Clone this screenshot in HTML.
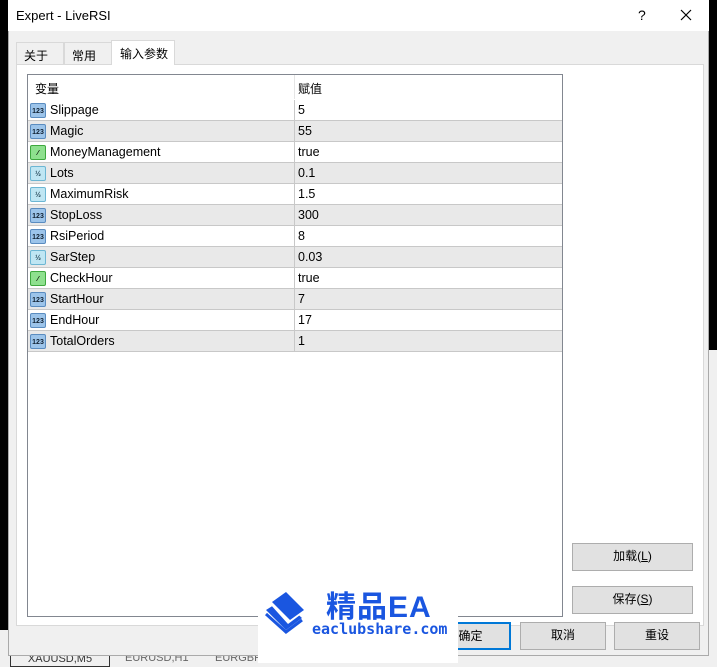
<!DOCTYPE html>
<html><head><style>
*{margin:0;padding:0;box-sizing:border-box}
body{width:717px;height:667px;background:#000;position:relative;overflow:hidden;font-family:"Liberation Sans","Noto Sans CJK SC",sans-serif;font-size:12px;color:#000}
.a{position:absolute}
.row{position:absolute;left:28px;width:534px;height:21px;border-bottom:1px solid #c8c8c8;font-size:12.5px}
.row .n{position:absolute;left:22px;top:3px}
.row .v{position:absolute;left:270px;top:3px}
.row .ic{position:absolute;left:2px;top:3px;width:16px;height:15px;border-radius:2px;font-size:7px;line-height:15px;text-align:center;font-weight:bold}
.i123{background:#9cc4ea;border:1px solid #5a8cc0;color:#123}
.ibool{background:#8ee08e;border:1px solid #3ea83e}
.ihalf{background:#bfe6f3;border:1px solid #6cb6d3;color:#245}
.g{background:#e9e9e9}
.btn{position:absolute;background:#e1e1e1;border:1px solid #adadad;text-align:center;line-height:25px;font-size:12px}
</style></head><body>
<div class="a" style="left:0;top:350px;width:717px;height:317px;background:#f0f0f0"></div>
<div class="a" style="left:0;top:0;width:8px;height:667px;background:#000"></div>
<div class="a" style="left:0;top:630px;width:8px;height:37px;background:#f0f0f0"></div>
<div class="a" style="left:10px;top:652px;width:100px;height:15px;border:1px solid #333;font-size:11px;color:#333;text-align:center">XAUUSD,M5</div>
<div class="a" style="left:125px;top:652px;font-size:11px;color:#666">EURUSD,H1</div>
<div class="a" style="left:215px;top:652px;font-size:11px;color:#666">EURGBP,H1</div>
<!-- dialog -->
<div class="a" style="left:8px;top:0;width:701px;height:656px;background:#f0f0f0;border:1px solid #aaa"></div>
<div class="a" style="left:8px;top:0;width:701px;height:31px;background:#fff"></div>
<div class="a" style="left:16px;top:8px;font-size:13px">Expert - LiveRSI</div>
<div class="a" style="left:638px;top:7px;font-size:14px">?</div>
<svg class="a" style="left:680px;top:9px" width="12" height="12"><path d="M1 1L11 11M11 1L1 11" stroke="#000" stroke-width="1.2"/></svg>
<!-- tabs -->
<div class="a" style="left:16px;top:42px;width:48px;height:22px;border:1px solid #d9d9d9;border-bottom:none;background:#f0f0f0;padding:4px 0 0 7px">关于</div>
<div class="a" style="left:64px;top:42px;width:48px;height:22px;border:1px solid #d9d9d9;border-bottom:none;background:#f0f0f0;padding:4px 0 0 7px">常用</div>
<div class="a" style="left:16px;top:64px;width:688px;height:562px;background:#fff;border:1px solid #d9d9d9"></div>
<div class="a" style="left:111px;top:40px;width:64px;height:25px;border:1px solid #d9d9d9;border-bottom:none;background:#fff;padding:4px 0 0 8px">输入参数</div>
<!-- table -->
<div class="a" style="left:27px;top:74px;width:536px;height:543px;border:1px solid #828790;background:#fff"></div>
<div class="a" style="left:294px;top:75px;width:1px;height:24px;background:#e5e5e5"></div>
<div class="a" style="left:35px;top:80px">变量</div>
<div class="a" style="left:298px;top:80px">赋值</div>
<div class="row" style="top:100px"><span class="ic i123">123</span><span class="n">Slippage</span><span class="v">5</span></div>
<div class="row g" style="top:121px"><span class="ic i123">123</span><span class="n">Magic</span><span class="v">55</span></div>
<div class="row" style="top:142px"><span class="ic ibool">⁄</span><span class="n">MoneyManagement</span><span class="v">true</span></div>
<div class="row g" style="top:163px"><span class="ic ihalf">½</span><span class="n">Lots</span><span class="v">0.1</span></div>
<div class="row" style="top:184px"><span class="ic ihalf">½</span><span class="n">MaximumRisk</span><span class="v">1.5</span></div>
<div class="row g" style="top:205px"><span class="ic i123">123</span><span class="n">StopLoss</span><span class="v">300</span></div>
<div class="row" style="top:226px"><span class="ic i123">123</span><span class="n">RsiPeriod</span><span class="v">8</span></div>
<div class="row g" style="top:247px"><span class="ic ihalf">½</span><span class="n">SarStep</span><span class="v">0.03</span></div>
<div class="row" style="top:268px"><span class="ic ibool">⁄</span><span class="n">CheckHour</span><span class="v">true</span></div>
<div class="row g" style="top:289px"><span class="ic i123">123</span><span class="n">StartHour</span><span class="v">7</span></div>
<div class="row" style="top:310px"><span class="ic i123">123</span><span class="n">EndHour</span><span class="v">17</span></div>
<div class="row g" style="top:331px"><span class="ic i123">123</span><span class="n">TotalOrders</span><span class="v">1</span></div>
<div class="a" style="left:294px;top:100px;width:1px;height:252px;background:#c8c8c8"></div>
<!-- buttons -->
<div class="btn" style="left:572px;top:543px;width:121px;height:28px">加载(<u>L</u>)</div>
<div class="btn" style="left:572px;top:586px;width:121px;height:28px">保存(<u>S</u>)</div>
<div class="btn" style="left:430px;top:622px;width:81px;height:28px;border:2px solid #0078d7;line-height:24px">确定</div>
<div class="btn" style="left:520px;top:622px;width:86px;height:28px">取消</div>
<div class="btn" style="left:614px;top:622px;width:86px;height:28px">重设</div>
<!-- watermark -->
<div class="a" style="left:258px;top:578px;width:200px;height:85px;background:#fff"></div>
<svg class="a" style="left:262px;top:588px" width="48" height="50" viewBox="0 0 48 50">
<path d="M4 22 L20 12 L40 30 L24 42 Z" fill="#1a56e0"/>
<path d="M8 16 L22 6 L42 24 L26 36 Z" fill="#fff"/>
<path d="M10 14 L24 4 L42 22 L28 32 Z" fill="#1a56e0"/>
<path d="M4 26 L24 44 L40 32" fill="none" stroke="#1a56e0" stroke-width="3"/>
</svg>
<div class="a" style="left:326px;top:582px;font-size:30px;font-weight:bold;color:#1a56e0;letter-spacing:1px">精品EA</div>
<div class="a" style="left:312px;top:620px;font-size:15px;font-weight:bold;color:#1a56e0;font-family:'DejaVu Sans Mono',monospace">eaclubshare.com</div>
</body></html>
